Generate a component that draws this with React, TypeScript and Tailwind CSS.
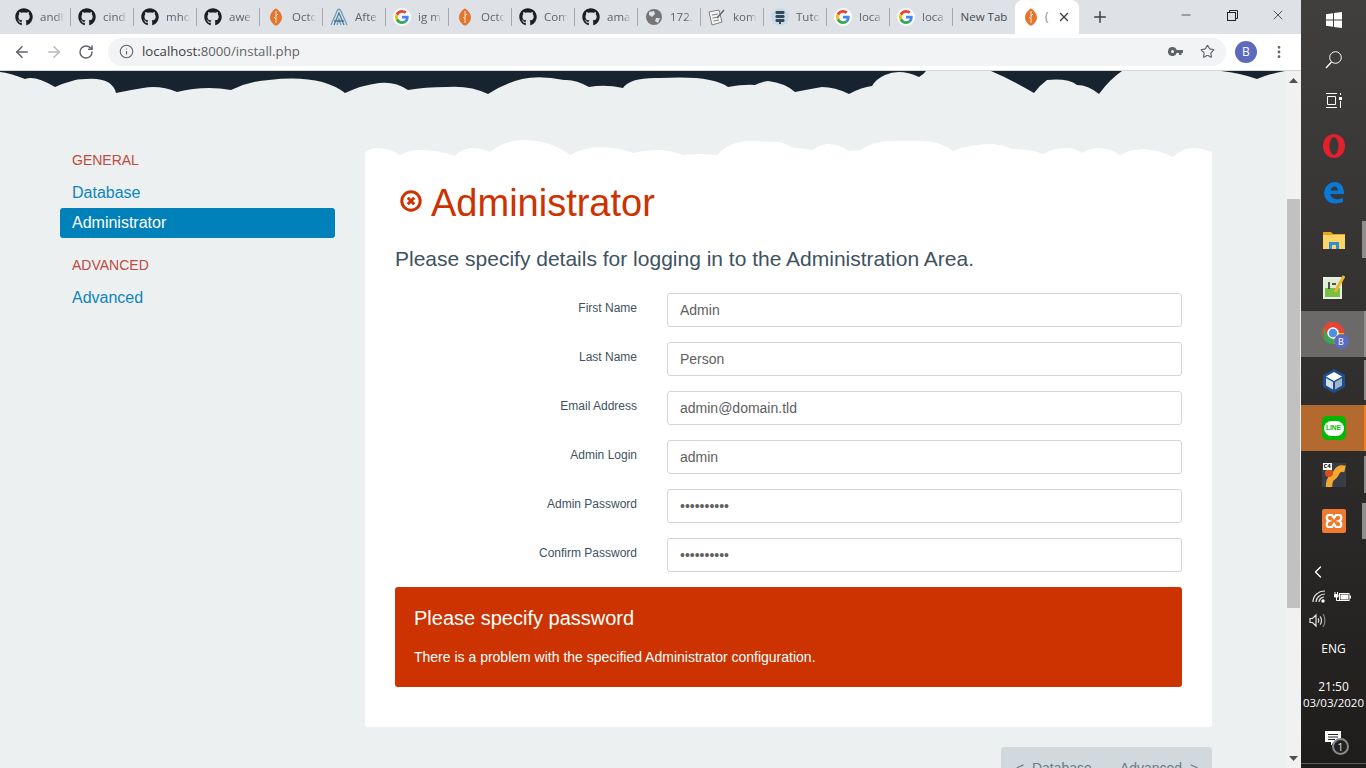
import React from "react";
import { FaGithub } from "react-icons/fa";
import { ArrowLeft, ArrowRight, RotateCw, Info, Star, X, Plus, Minus, MoreVertical, ChevronLeft } from "lucide-react";

const ui = { fontFamily: '"Open Sans", "Liberation Sans", sans-serif' };

function G({ s = 18 }: { s?: number }) {
  return (
    <span className="flex h-[18px] w-[18px] items-center justify-center rounded-full bg-white">
      <svg width={s - 4} height={s - 4} viewBox="0 0 48 48">
        <path fill="#EA4335" d="M24 9.5c3.5 0 6.700 1.200 9.200 3.600l6.900-6.900C35.900 2.400 30.400 0 24 0 14.600 0 6.500 5.400 2.600 13.200l8 6.200C12.500 13.700 17.800 9.500 24 9.500z" />
        <path fill="#4285F4" d="M46.900 24.500c0-1.600-.1-3.100-.4-4.500H24v9h12.900c-.6 3-2.200 5.400-4.700 7.100l7.700 6c4.500-4.200 7-10.300 7-17.600z" />
        <path fill="#FBBC05" d="M10.500 28.600c-.5-1.400-.8-3-.8-4.600s.3-3.200.8-4.600l-8-6.200C.9 16.500 0 20.100 0 24s.9 7.500 2.600 10.800l7.900-6.200z" />
        <path fill="#34A853" d="M24 48c6.500 0 11.900-2.100 15.900-5.800l-7.700-6c-2.200 1.400-4.900 2.300-8.200 2.300-6.200 0-11.500-4.200-13.400-9.900l-8 6.200C6.500 42.600 14.600 48 24 48z" />
      </svg>
    </span>
  );
}

function Leaf() {
  return (
    <svg width="14" height="18" viewBox="0 0 14 18">
      <path fill="#e2762c" d="M6.500 0.500 C3 3 1 6 1 9.500 C1 13 3.500 15.500 6 17.500 L8 17.500 C10.500 15.500 13 13 13 9.500 C13 6 10.500 3 8 1 Z" />
      <path stroke="#fbe3d2" strokeWidth="1" fill="none" d="M7 3 V15 M7 8 L9 6 M7 11 L5 9" />
    </svg>
  );
}

function AIcon() {
  return (
    <svg width="18" height="18" viewBox="0 0 18 18" fill="none" stroke="#6f9dbb" strokeWidth="1.300">
      <path d="M1 17 L7.500 2 Q9 0.500 10.500 2 L17 17" />
      <path d="M4 17 L9 5 L14 17" stroke="#4d7f9f" />
      <path d="M7 17 L9 11 L11 17" />
      <path d="M4 13 H14" stroke="#3d6b8a" />
    </svg>
  );
}

function Globe() {
  return (
    <svg width="16" height="16" viewBox="0 0 16 16">
      <circle cx="8" cy="8" r="8" fill="#757575" />
      <path fill="#dee1e6" d="M3 3 L8 2 L9 5 L6 8 L3 6 Z M10 9 L14 9 L12 14 L9 12 Z" />
    </svg>
  );
}

function Kom() {
  return (
    <svg width="18" height="18" viewBox="0 0 18 18" fill="none" stroke="#808080" strokeWidth="1">
      <path d="M1 4 L11 2 L14 14 L4 17 Z" fill="#f5f5f5" />
      <path d="M4 7 L10 6 M4.500 10 L11 9 M5.500 13 L11 12" />
      <path d="M9 10 L16 2" stroke="#666" strokeWidth="1.500" />
    </svg>
  );
}

function Db() {
  return (
    <svg width="18" height="18" viewBox="0 0 18 18">
      <circle cx="9" cy="9" r="9" fill="#c7dbe6" />
      <rect x="4.500" y="3" width="9" height="3" rx="1.200" fill="#34465a" />
      <rect x="4.500" y="7" width="9" height="3" rx="1.200" fill="#34465a" />
      <rect x="4.500" y="11" width="9" height="3" rx="1.200" fill="#34465a" />
      <rect x="8" y="14" width="2" height="2" fill="#34465a" />
    </svg>
  );
}

const tabs: { icon: React.ReactNode; label: string }[] = [
  { icon: <FaGithub size={18} color="#1b1f23" />, label: "andl" },
  { icon: <FaGithub size={18} color="#1b1f23" />, label: "cind" },
  { icon: <FaGithub size={18} color="#1b1f23" />, label: "mho" },
  { icon: <FaGithub size={18} color="#1b1f23" />, label: "awe" },
  { icon: <Leaf />, label: "Octo" },
  { icon: <AIcon />, label: "Afte" },
  { icon: <G />, label: "ig m" },
  { icon: <Leaf />, label: "Octo" },
  { icon: <FaGithub size={18} color="#1b1f23" />, label: "Com" },
  { icon: <FaGithub size={18} color="#1b1f23" />, label: "ama" },
  { icon: <Globe />, label: "172." },
  { icon: <Kom />, label: "kom" },
  { icon: <Db />, label: "Tuto" },
  { icon: <G />, label: "loca" },
  { icon: <G />, label: "loca" },
];

function TabBar() {
  return (
    <div className="flex h-[34px] items-stretch bg-[#dee1e6] pl-[8px]" style={ui}>
      {tabs.map((t, i) => (
        <div key={i} className="flex h-[34px] w-[63px] items-center pl-[7px]">
          <span className="flex w-[18px] shrink-0 items-center justify-center">{t.icon}</span>
          <span className="ml-[7px] w-[24px] overflow-hidden whitespace-nowrap text-[11.500px] leading-[16px] text-[#5f6368] [mask-image:linear-gradient(to_right,black_65%,transparent)]">{t.label}</span>
          <span className="ml-auto h-[18px] w-px bg-[#a3a6aa]" />
        </div>
      ))}
      <div className="flex h-[34px] w-[62px] items-center justify-center text-[11.500px] text-[#45494d]">New Tab</div>
      <div className="flex h-[34px] w-[64px] items-center rounded-t-[8px] bg-white pl-[9px]">
        <Leaf />
        <span className="ml-[7px] text-[12px] text-[#888]">(</span>
        <X size={14} strokeWidth={2.4} className="ml-[8px] text-[#3c4043]" />
      </div>
      <div className="ml-[12px] flex h-[34px] w-[18px] items-center justify-center">
        <Plus size={18} strokeWidth={2} className="text-[#3c4043]" />
      </div>
      <div className="ml-auto flex h-[30px] items-center text-[#222]">
        <div className="flex w-[46px] justify-center"><Minus size={14} strokeWidth={1.2} /></div>
        <div className="flex w-[46px] justify-center">
          <svg width="11" height="11" viewBox="0 0 11 11" fill="none" stroke="#222" strokeWidth="1">
            <rect x="0.500" y="2.500" width="8" height="8" />
            <path d="M2.500 2.500 V0.500 H10.500 V8.500 H8.500" />
          </svg>
        </div>
        <div className="flex w-[46px] justify-center"><X size={16} strokeWidth={1.1} /></div>
      </div>
    </div>
  );
}

function Toolbar() {
  return (
    <div className="flex h-[37px] items-center border-b border-[#d3d5d8] bg-white pb-[1px]">
      <div className="flex w-[108px] shrink-0 items-center">
        <ArrowLeft size={18} strokeWidth={2} className="ml-[13px] text-[#5f6368]" />
        <ArrowRight size={18} strokeWidth={2} className="ml-[14px] text-[#b8babd]" />
        <RotateCw size={16} strokeWidth={2.2} className="ml-[15px] text-[#5f6368]" />
      </div>
      <div className="flex h-[28px] w-[1118px] items-center rounded-full bg-[#f1f3f4] pl-[11px] pr-[11px]">
        <Info size={15} strokeWidth={1.8} className="text-[#5f6368]" />
        <span className="ml-[8px] text-[13.200px] text-[#3c4043]" style={{ fontFamily: '"Open Sans", sans-serif' }}>localhost:<span className="text-[#5f6368]">8000/install.php</span></span>
        <svg width="15" height="9" viewBox="0 0 15 9" className="ml-auto mr-[18px]" fill="#5f6368">
          <path fillRule="evenodd" d="M4.500 0 A4.500 4.500 0 0 1 8.700 3 H15 V6 H13.500 V8 H11 V6 H8.700 A4.500 4.500 0 1 1 4.500 0 Z M4.500 3 A1.500 1.500 0 1 0 4.500 6 A1.500 1.500 0 1 0 4.500 3 Z" />
        </svg>
        <Star size={15} strokeWidth={1.8} className="ml-[-1px] text-[#5f6368]" />
      </div>
      <div className="ml-[9px] flex h-[22px] w-[22px] items-center justify-center rounded-full bg-[#5c6bc0] text-[12px] text-white" style={ui}>B</div>
      <MoreVertical size={16} strokeWidth={2.2} className="ml-[14px] text-[#5f6368]" />
    </div>
  );
}

function HeaderClouds() {
  return (
    <svg className="block h-[24px] w-full shrink-0" viewBox="0 0 1285 24" preserveAspectRatio="none">
      <path
        fill="#172430"
        d="M0 0 H1285 Q1272 2 1257 8 Q1240 2 1221 0 H1122 Q1110 8 1099 23 Q1088 14 1077 14 Q1068 7 1047 9 Q1040 14 1034 22 Q1010 8 991 0 H926 Q924 3 919 6 Q900 -3 885 4 Q876 8 872 15 Q862 16 849 23 Q835 16 822 16 Q810 18 795 21 Q785 12 768 10 Q760 11 755 14 Q745 13 728 16 Q712 4 660 7 Q630 6 623 17 Q605 13 589 16 Q575 8 564 9 Q540 4 522 8 Q505 12 488 23 Q470 14 446 16 Q425 16 408 19 Q395 10 379 12 Q362 14 345 22 Q320 3 269 9 Q250 10 231 19 Q205 14 177 21 Q160 14 143 17 Q130 19 116 22 Q112 6 86 8 Q76 8 72 10 Q64 12 55 16 Q35 4 25 8 Q10 2 0 1 Z"
      />
    </svg>
  );
}

function CardClouds() {
  return (
    <svg className="block h-[19px] w-full" viewBox="365 139 847 19" preserveAspectRatio="none">
      <path
        fill="#ffffff"
        d="M365 158 V153 Q370 148 377 148 Q390 148 400 155 Q410 150 420 150 Q440 150 455 156 Q462 148 472 148 Q482 148 490 152 Q505 140 523 140 Q550 140 570 155 Q585 147 600 147 Q618 147 633 153 Q645 150 657 150 Q670 150 683 155 Q700 153 717 155 Q730 141 750 141 L780 142 Q788 144 793 148 Q803 148 812 150 Q820 144 828 144 Q840 144 848 151 L860 150 Q875 141 890 141 H923 Q940 141 953 151 Q970 144 993 144 Q1003 145 1013 149 Q1030 149 1043 154 Q1053 148 1067 148 Q1075 148 1082 153 Q1090 148 1098 148 Q1110 148 1120 155 Q1130 149 1143 149 Q1160 150 1173 157 Q1182 148 1193 148 Q1202 148 1210 152 L1212 151 V158 Z"
      />
    </svg>
  );
}

function Sidebar() {
  return (
    <div className="w-[275px] shrink-0 pt-[55px]">
      <div className="pl-[12px] text-[14px] leading-[20px] text-[#bf4a40]">GENERAL</div>
      <div className="mt-[11px] pl-[12px] text-[16px] leading-[23px] text-[#0f85ba]">Database</div>
      <div className="mt-[4px] flex h-[30px] items-center rounded-[3px] bg-[#0181b9] pl-[12px] text-[16px] text-white">Administrator</div>
      <div className="mt-[17px] pl-[12px] text-[14px] leading-[20px] text-[#bf4a40]">ADVANCED</div>
      <div className="mt-[11px] pl-[12px] text-[16px] leading-[23px] text-[#0f85ba]">Advanced</div>
    </div>
  );
}

const fields = [
  ["First Name", "Admin"],
  ["Last Name", "Person"],
  ["Email Address", "admin@domain.tld"],
  ["Admin Login", "admin"],
  ["Admin Password", "••••••••••"],
  ["Confirm Password", "••••••••••"],
];

function Card() {
  return (
    <div className="ml-[30px] w-[847px] shrink-0 pt-[44px]">
      <CardClouds />
      <div className="h-[569px] rounded-b-[3px] bg-white pl-[30px] pr-[30px]">
        <div className="flex items-center pl-[5px] pt-[23px]">
          <svg width="22" height="22" viewBox="0 0 22 22" className="mt-[-4px]">
            <circle cx="11" cy="11" r="9.200" fill="none" stroke="#cc3300" strokeWidth="3" />
            <path d="M7.800 7.800 L14.200 14.200 M14.200 7.800 L7.800 14.200" stroke="#cc3300" strokeWidth="3" />
          </svg>
          <h1 className="ml-[9px] text-[38px] leading-[44px] text-[#cc3300]">Administrator</h1>
        </div>
        <p className="mt-[19px] text-[21px] leading-[30px] text-[#405261]">Please specify details for logging in to the Administration Area.</p>
        <div className="mt-[19px] flex flex-col gap-[15px]">
          {fields.map(([l, v]) => (
            <div key={l} className="flex h-[34px]">
              <label className="w-[242px] pt-[7px] text-right text-[12px] leading-[16px] text-[#405261]">{l}</label>
              <div className="ml-[30px] flex h-[34px] w-[515px] items-center rounded-[3px] border border-[#d1d6d9] bg-white pl-[12px] text-[14px] text-[#606060]">{v}</div>
            </div>
          ))}
        </div>
        <div className="mt-[15px] h-[100px] rounded-[3px] bg-[#cc3300] pl-[19px] pt-[19px] text-white">
          <div className="text-[20px] leading-[24px]">Please specify password</div>
          <div className="mt-[17px] text-[14px] leading-[20px]">There is a problem with the specified Administrator configuration.</div>
        </div>
      </div>
      <div className="ml-[636px] mt-[20px] flex h-[40px] w-[211px] rounded-t-[3px] bg-[#d1d9dd] pl-[15px] pt-[11px] text-[14px] text-[#6b7a85]">
        <span>&lt;&nbsp; Database</span>
        <span className="ml-[28px]">Advanced &nbsp;&gt;</span>
      </div>
    </div>
  );
}

function Scrollbar() {
  return (
    <div className="flex w-[16px] shrink-0 flex-col items-center bg-[#f1f1f1]">
      <svg width="9" height="5" viewBox="0 0 9 5" className="mt-[7px]"><path d="M0 5 L4.500 0 L9 5 Z" fill="#505050" /></svg>
      <div className="mt-[116px] h-[409px] w-[13px] bg-[#c1c1c1]" />
      <svg width="9" height="5" viewBox="0 0 9 5" className="mt-[148px]"><path d="M0 0 L4.500 5 L9 0 Z" fill="#505050" /></svg>
    </div>
  );
}

function Win() {
  return (
    <svg width="16" height="16" viewBox="0 0 16 16" fill="#fff">
      <path d="M0 2.300 L7 1.300 V7.500 H0 Z M8 1.100 L16 0 V7.500 H8 Z M0 8.500 H7 V14.700 L0 13.700 Z M8 8.500 H16 V16 L8 14.900 Z" />
    </svg>
  );
}

function TItem({ h, children, bg, strip }: { h: number; children: React.ReactNode; bg?: string; strip?: string }) {
  return (
    <div className={`relative flex shrink-0 items-center justify-center ${bg ?? ""}`} style={{ height: h }}>
      {children}
      {strip ? <span className={`absolute right-0 ${strip}`} /> : null}
    </div>
  );
}

function Taskbar() {
  return (
    <div className="flex w-[65px] shrink-0 flex-col bg-gradient-to-b from-[#403f3d] via-[#302f2d] to-[#1e1d1c] text-white" style={ui}>
      <TItem h={40}><Win /></TItem>
      <TItem h={40}>
        <svg width="17" height="18" viewBox="0 0 17 18" fill="none" stroke="#fff" strokeWidth="1">
          <circle cx="10.500" cy="6.500" r="5.800" />
          <path d="M6.500 11 L1 17" strokeWidth="1.300" />
        </svg>
      </TItem>
      <TItem h={40}>
        <svg width="16" height="15" viewBox="0 0 16 15" fill="none" stroke="#fff" strokeWidth="1">
          <path d="M0 .5 H11 M0 14.500 H11 M1.500 3.500 H9.500 V11.500 H1.500 Z M14.500 0 V2 M14.500 8 V15" />
          <rect x="13" y="4" width="3" height="3" fill="#fff" stroke="none" />
        </svg>
      </TItem>
      <div className="h-[3px] shrink-0" />
      <TItem h={46}>
        <svg width="22" height="24" viewBox="0 0 22 24">
          <ellipse cx="11" cy="12" rx="11" ry="12" fill="#e3202d" />
          <ellipse cx="11" cy="12" rx="4.500" ry="9" fill="#3a3937" />
        </svg>
      </TItem>
      <TItem h={47}>
        <svg width="20" height="22" viewBox="0 0 20 22">
          <path fill="#0a78d7" d="M0 11 C1 4 5 0 11 0 C17 0 20 5 20 12 H6.500 C7 16 11 19 19 16 V20 C11 23 1 22 0 11 Z M6.500 8.500 H14 C14 5 11 4 9.500 4.500 C8 5 7 7 6.500 8.500 Z" />
        </svg>
      </TItem>
      <TItem h={47} strip="top-[5px] bottom-[5px] w-[4px] bg-[#8f8e8c]">
        <svg width="22" height="20" viewBox="0 0 22 20">
          <path fill="#e8a41b" d="M0 2 H8 L10 4 H22 V19 H0 Z" />
          <rect x="0" y="5" width="22" height="14" fill="#fbd568" />
          <rect x="6" y="12" width="10" height="7" fill="#2e8fd8" />
          <rect x="9" y="15" width="4" height="4" fill="#fbd568" />
        </svg>
      </TItem>
      <TItem h={47}>
        <svg width="22" height="24" viewBox="0 0 22 24">
          <rect x="0" y="2" width="19" height="22" fill="#e8efe6" />
          <rect x="2" y="4" width="15" height="18" fill="#77c043" />
          <rect x="2" y="4" width="15" height="9" fill="#dfeed1" />
          <path d="M6 7 V14 M9 9 H13" stroke="#222" strokeWidth="1.500" />
          <path d="M21 1 L12 17" stroke="#eeb32c" strokeWidth="3" />
        </svg>
      </TItem>
      <div className="h-[1px] shrink-0" />
      <TItem h={46} bg="bg-[#6b6a68]" strip="top-0 bottom-0 w-[2px] bg-[#8f8e8c]">
        <div className="relative h-[24px] w-[24px]">
          <svg width="22" height="22" viewBox="0 0 22 22" className="absolute left-0 top-0">
            <circle cx="11" cy="11" r="11" fill="#ea4335" />
            <path d="M11 11 L1.500 16.500 A11 11 0 0 0 12 22 Z" fill="#34a853" />
            <path d="M11 11 L22 11 A11 11 0 0 1 12 22 Z" fill="#fbbc05" />
            <path d="M1.500 5.500 L6 13 L1.500 16.500 Z" fill="#34a853" />
            <circle cx="11" cy="11" r="5" fill="#4a90e2" stroke="#fff" strokeWidth="1.500" />
          </svg>
          <span className="absolute bottom-[-3px] right-[-3px] flex h-[15px] w-[15px] items-center justify-center rounded-full bg-[#5c6bc0] text-[9px] leading-none">B</span>
        </div>
      </TItem>
      <TItem h={48} strip="top-[3px] bottom-[5px] w-[2px] bg-[#8f8e8c]">
        <svg width="22" height="24" viewBox="0 0 22 24">
          <path fill="#1d4f8c" d="M11 0 L22 6 V18 L11 24 L0 18 V6 Z" />
          <path fill="#fff" d="M11 3 L19 7.500 L11 12 L3 7.500 Z" />
          <path fill="#d5dee8" d="M3 9 L10 13 V20.500 L3 16.500 Z" />
          <path fill="#9fb3c9" d="M12 13 L19 9 V16.500 L12 20.500 Z" />
        </svg>
      </TItem>
      <TItem h={46} bg="bg-[#b46a2f]" strip="top-0 bottom-0 w-[2px] bg-[#f08020]">
        <div className="flex h-[24px] w-[24px] items-center justify-center rounded-[5px] bg-[#00b900]">
          <span className="flex h-[15px] w-[20px] items-center justify-center rounded-[8px] bg-white text-[6.500px] font-bold leading-none text-[#00b900]" style={{ fontFamily: '"Liberation Sans", sans-serif' }}>LINE</span>
        </div>
      </TItem>
      <TItem h={47} strip="top-[5px] bottom-[5px] w-[2px] bg-[#8f8e8c]">
        <div className="relative h-[24px] w-[24px] bg-[#3a3d45]">
          <svg width="24" height="24" viewBox="0 0 24 24" className="absolute inset-0">
            <path d="M23 6 C15 4 15 10 12 13 C10 15 7 15 7 24" stroke="#f3a931" strokeWidth="6.500" fill="none" />
            <circle cx="7" cy="10" r="4" fill="#d8501e" />
          </svg>
          <span className="absolute left-[1px] top-0 bg-white px-[1px] text-[6px] font-bold leading-[7px] text-black">C4</span>
        </div>
      </TItem>
      <TItem h={46} strip="top-[5px] bottom-[5px] w-[4px] bg-[#8f8e8c]">
        <svg width="24" height="24" viewBox="0 0 24 24">
          <rect width="24" height="24" rx="2" fill="#ee7a30" />
          <path d="M7 6 H10 L12 9 L14 6 H17 C20 6 20 11 17 12 C20 13 20 18 17 18 H14 L12 15 L10 18 H7 C4 18 4 13 7 12 C4 11 4 6 7 6 Z" fill="none" stroke="#fff" strokeWidth="2.200" />
        </svg>
      </TItem>
      <div className="flex h-[38px] shrink-0 items-end pl-[7px]">
        <ChevronLeft size={20} strokeWidth={1.6} />
      </div>
      <div className="mt-[5px] flex h-[19px] shrink-0 items-center pl-[11px]">
        <svg width="14" height="13" viewBox="0 0 14 13" fill="none" stroke="#e4e4e4" strokeWidth="1.200">
          <path d="M1 12 C1 6 6 1 13 1 M4 12 C4 8 8 4 13 4 M7 12 C7 10 9 7 12 7" />
          <circle cx="11" cy="11" r="1.700" fill="#fff" stroke="none" />
        </svg>
        <svg width="17" height="11" viewBox="0 0 17 11" className="ml-[8px]" fill="none" stroke="#fff">
          <path d="M1 1 V3 M3.500 1 V3" strokeWidth="1" />
          <path d="M0.500 3.500 H4 V6 H0.500 Z" fill="#fff" />
          <path d="M2.500 6 V9.500 H5" strokeWidth="1" />
          <rect x="5.500" y="2.500" width="9.500" height="7" />
          <rect x="6.500" y="3.500" width="7.500" height="5" fill="#fff" stroke="none" />
          <rect x="15.500" y="4.500" width="1.500" height="3" fill="#fff" stroke="none" />
        </svg>
      </div>
      <div className="mt-[4px] flex h-[20px] shrink-0 items-center pl-[8px]">
        <svg width="17" height="15" viewBox="0 0 17 15" fill="none" stroke="#e4e4e4" strokeWidth="1.200">
          <path d="M1 5.500 H3.500 L7 2 V13 L3.500 9.500 H1 Z M9 5.500 C10 6.500 10 8.500 9 9.500 M11 3.500 C13 5.500 13 9.500 11 11.500" />
          <path d="M14 1 C16.500 4.500 16.500 10.500 14 14" stroke="#888" />
        </svg>
      </div>
      <div className="mt-[10px] text-center text-[12px] leading-[18px]">ENG</div>
      <div className="mt-[21px] text-center text-[12px] leading-[16px]">21:50</div>
      <div className="whitespace-nowrap text-center text-[11.500px] leading-[16px]">03/03/2020</div>
      <div className="relative mt-[18px] h-[26px] shrink-0">
        <svg width="16" height="15" viewBox="0 0 16 15" className="ml-[24px] mt-[2px]">
          <path fill="#fff" d="M0 0 H16 V11 H9 L6 14.500 V11 H0 Z" />
          <path d="M3 3.500 H13 M3 6 H13 M3 8.500 H10" stroke="#222" strokeWidth="1" />
        </svg>
        <span className="absolute left-[31px] top-[9px] flex h-[17px] w-[17px] items-center justify-center rounded-full border-2 border-[#8a8a8a] bg-[#222] text-[11px] leading-none text-[#ddd]">1</span>
      </div>
      <div className="mt-[8px] h-px shrink-0 bg-[#5c5c5c]" />
    </div>
  );
}

export default function App() {
  return (
    <div className="flex h-[768px] w-[1366px] overflow-hidden" style={{ fontFamily: '"Liberation Sans", Arial, sans-serif' }}>
      <div className="flex w-[1301px] shrink-0 flex-col">
        <TabBar />
        <Toolbar />
        <div className="flex min-h-0 flex-1 overflow-hidden">
          <div className="flex w-[1285px] shrink-0 flex-col overflow-hidden bg-[#ecf0f1]">
            <HeaderClouds />
            <div className="flex pl-[60px]">
              <Sidebar />
              <Card />
            </div>
          </div>
          <Scrollbar />
        </div>
      </div>
      <Taskbar />
    </div>
  );
}
